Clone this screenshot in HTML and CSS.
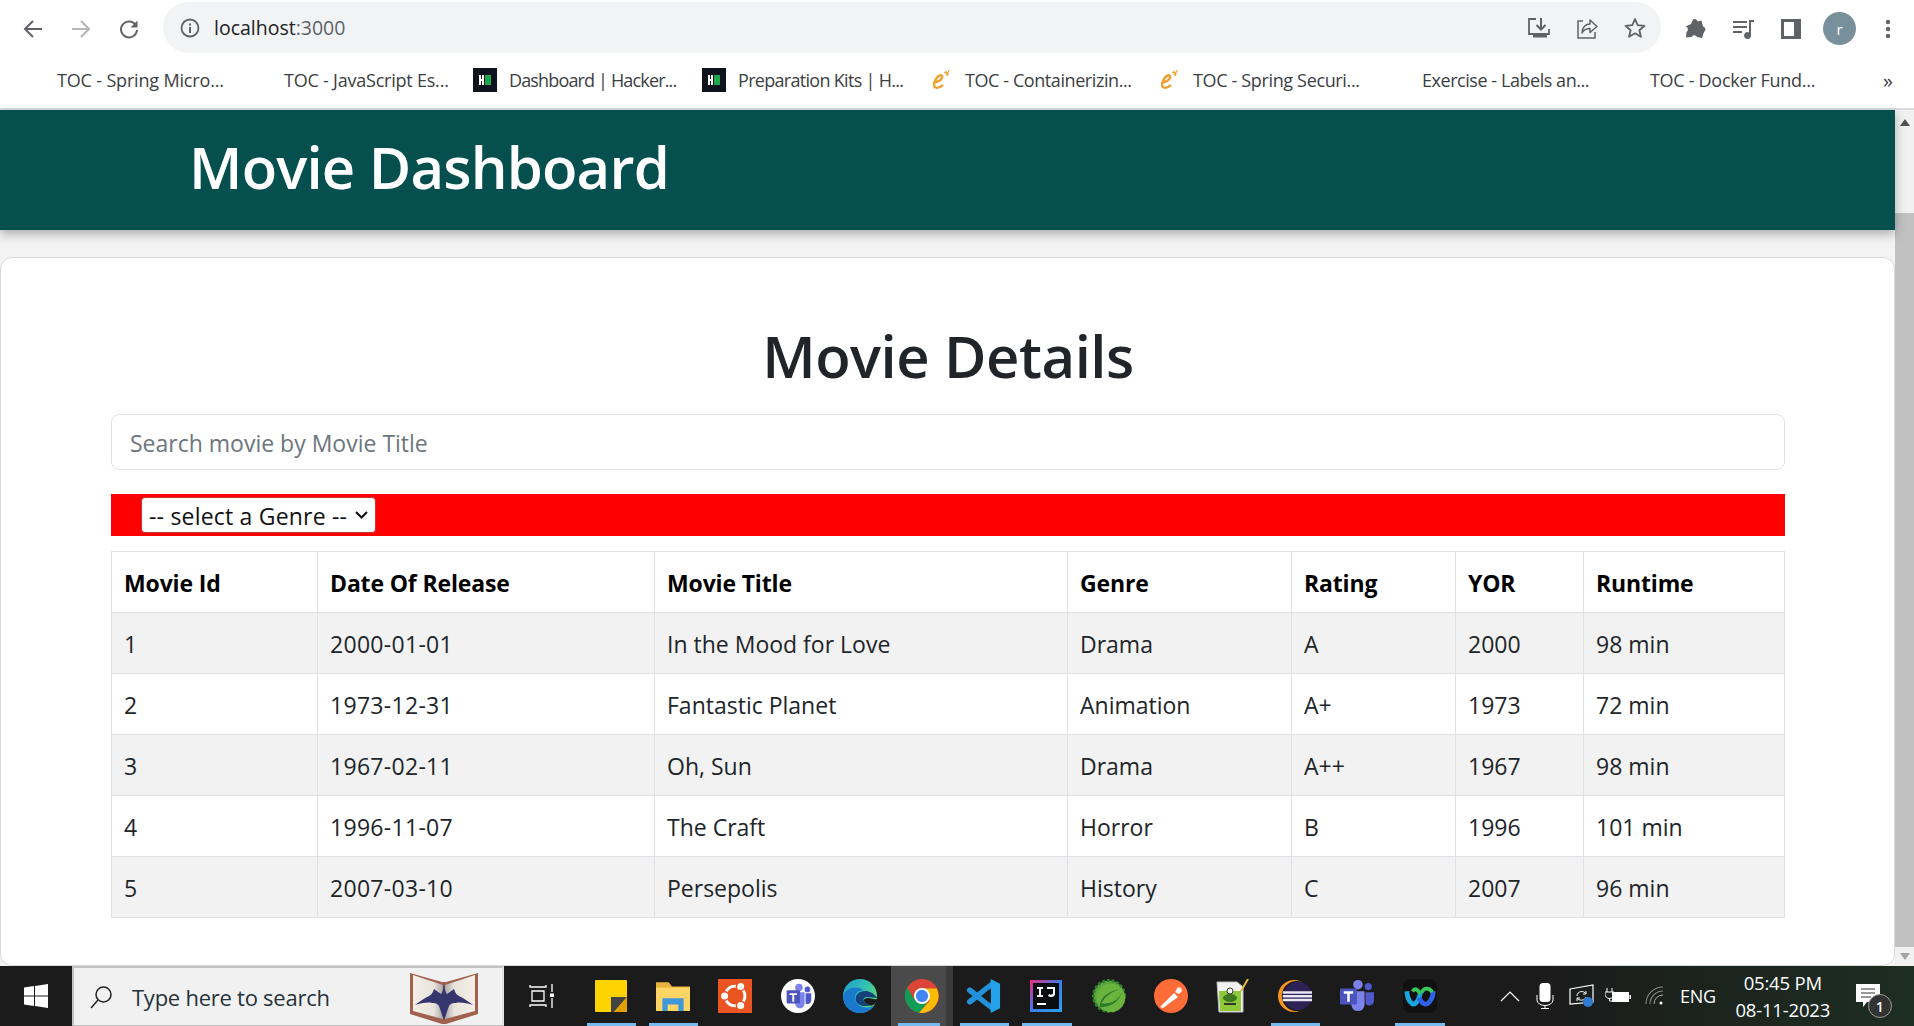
FILE: index.html
```html
<!DOCTYPE html>
<html lang="en">
<head>
<meta charset="utf-8">
<title>Movie Dashboard</title>
<link rel="stylesheet" href="styles.css">
</head>
<body>
<div class="toolbar">
  <div class="nav">
    <svg class="nav-icon" viewBox="0 0 24 24"><path d="M21 12H4M12 4l-8 8 8 8" fill="none" stroke="#5f6368" stroke-width="2"/></svg>
    <svg class="nav-icon" viewBox="0 0 24 24"><path d="M3 12h17M12 4l8 8-8 8" fill="none" stroke="#b4b6b9" stroke-width="2"/></svg>
    <svg class="nav-icon" viewBox="0 0 24 24"><path d="M19 8.500A8 8 0 1 0 20 13" fill="none" stroke="#5f6368" stroke-width="2"/><path d="M20.500 3.500v7h-7z" fill="#5f6368"/></svg>
  </div>
  <div class="omnibox">
    <svg class="info" viewBox="0 0 20 20"><circle cx="10" cy="10" r="8.500" fill="none" stroke="#5f6368" stroke-width="1.800"/><path d="M9 9h2v6H9zM9 5.500h2v2H9z" fill="#5f6368"/></svg>
    <span class="url">localhost<span class="port">:3000</span></span>
    <span class="omni-actions">
      <svg class="tool" viewBox="0 0 24 24"><path d="M9 3H2v15h20v-5" fill="none" stroke="#5f6368" stroke-width="1.800"/><path d="M14 2v11M9.500 9l4.500 4.500L18.500 9" fill="none" stroke="#5f6368" stroke-width="2"/><path d="M6 18h14v3.500H6z" fill="#5f6368"/></svg>
      <svg class="tool" viewBox="0 0 24 24"><path d="M8 5H3v17h17v-6" fill="none" stroke="#5f6368" stroke-width="1.500"/><path d="M7 17c0-6 4-9 8-9V4l7 6.500-7 6v-4c-3 0-6 1-8 4.500z" fill="none" stroke="#5f6368" stroke-width="1.500" stroke-linejoin="round"/></svg>
      <svg class="tool" viewBox="0 0 24 24"><path d="m12 3 2.700 6.200 6.800.6-5.100 4.400 1.500 6.600L12 17.300l-5.900 3.500 1.500-6.600-5.100-4.400 6.800-.6z" fill="none" stroke="#5f6368" stroke-width="1.800" stroke-linejoin="round"/></svg>
    </span>
  </div>
  <div class="chrome-actions">
    <svg class="tool" viewBox="0 0 24 24"><path d="M10 2.500a2.800 2.800 0 0 1 4.500 2l4-1 1.500 6a3 3 0 0 1 1 5.500l-2 6-5-1a3 3 0 0 0-5.500 0l-5.500.5.500-5.500a3 3 0 0 0-1-5.500l5.500-2.500z" fill="#5f6368"/></svg>
    <svg class="tool" viewBox="0 0 24 24"><path d="M2 4h14v2H2zM2 9h14v2H2zM2 14h9v2H2zM18 3h5v2h-3v13.500a3.500 3.500 0 1 1-2-3.100z" fill="#5f6368"/></svg>
    <svg class="tool" viewBox="0 0 24 24"><path d="M2 2h20v20H2zM5 5v14h10V5z" fill="#5f6368" fill-rule="evenodd"/></svg>
    <span class="avatar">r</span>
    <svg class="tool" viewBox="0 0 24 24"><circle cx="12" cy="5" r="2.200" fill="#5f6368"/><circle cx="12" cy="12" r="2.200" fill="#5f6368"/><circle cx="12" cy="19" r="2.200" fill="#5f6368"/></svg>
  </div>
</div>

<div class="bookmarks">
  <div class="bookmark"><span class="fav"></span><span>TOC - Spring Micro...</span></div>
  <div class="bookmark"><span class="fav"></span><span>TOC - JavaScript Es...</span></div>
  <div class="bookmark"><span class="fav"><svg viewBox="0 0 24 24"><rect width="24" height="24" fill="#0e141e"/><path d="M6 7h2v4h1V7h2v10H9v-4H8v4H6z" fill="#fff"/><rect x="12" y="7" width="6" height="10" fill="#1ba94c"/></svg></span><span>Dashboard | Hacker...</span></div>
  <div class="bookmark"><span class="fav"><svg viewBox="0 0 24 24"><rect width="24" height="24" fill="#0e141e"/><path d="M6 7h2v4h1V7h2v10H9v-4H8v4H6z" fill="#fff"/><rect x="12" y="7" width="6" height="10" fill="#1ba94c"/></svg></span><span>Preparation Kits | H...</span></div>
  <div class="bookmark"><span class="fav"><svg viewBox="0 0 24 24"><path d="M4 15c6-1 10-4 9-7-1-2-5 0-7 5-3 7 2 9 8 4" fill="none" stroke="#f0a030" stroke-width="2.400"/><path d="m17 3 1.500 5M20.500 2 17 7M15 4l5 2" stroke="#f0a030" stroke-width="1.200"/></svg></span><span>TOC - Containerizin...</span></div>
  <div class="bookmark"><span class="fav"><svg viewBox="0 0 24 24"><path d="M4 15c6-1 10-4 9-7-1-2-5 0-7 5-3 7 2 9 8 4" fill="none" stroke="#f0a030" stroke-width="2.400"/><path d="m17 3 1.500 5M20.500 2 17 7M15 4l5 2" stroke="#f0a030" stroke-width="1.200"/></svg></span><span>TOC - Spring Securi...</span></div>
  <div class="bookmark"><span class="fav"></span><span>Exercise - Labels an...</span></div>
  <div class="bookmark"><span class="fav"></span><span>TOC - Docker Fund...</span></div>
  <div class="more">»</div>
</div>

<div class="viewport">
  <div class="page">
    <header class="app-header"><h1>Movie Dashboard</h1></header>
    <main class="card">
      <h2>Movie Details</h2>
      <input class="search" type="text" placeholder="Search movie by Movie Title">
      <div class="filter">
        <select class="genre"><option>-- select a Genre --</option></select>
      </div>
      <table class="movies">
        <colgroup><col class="c1"><col class="c2"><col class="c3"><col class="c4"><col class="c5"><col class="c6"><col class="c7"></colgroup>
        <thead><tr><th>Movie Id</th><th>Date Of Release</th><th>Movie Title</th><th>Genre</th><th>Rating</th><th>YOR</th><th>Runtime</th></tr></thead>
        <tbody>
          <tr><td>1</td><td>2000-01-01</td><td>In the Mood for Love</td><td>Drama</td><td>A</td><td>2000</td><td>98 min</td></tr>
          <tr><td>2</td><td>1973-12-31</td><td>Fantastic Planet</td><td>Animation</td><td>A+</td><td>1973</td><td>72 min</td></tr>
          <tr><td>3</td><td>1967-02-11</td><td>Oh, Sun</td><td>Drama</td><td>A++</td><td>1967</td><td>98 min</td></tr>
          <tr><td>4</td><td>1996-11-07</td><td>The Craft</td><td>Horror</td><td>B</td><td>1996</td><td>101 min</td></tr>
          <tr><td>5</td><td>2007-03-10</td><td>Persepolis</td><td>History</td><td>C</td><td>2007</td><td>96 min</td></tr>
        </tbody>
      </table>
    </main>
  </div>
  <div class="scrollbar">
    <span class="arrow-up"></span>
    <span class="track"></span>
    <span class="thumb"></span>
    <span class="arrow-down"></span>
  </div>
</div>

<footer class="taskbar">
  <div class="start"><svg viewBox="0 0 24 24" width="24" height="24"><path d="M0 3.500 10 2v9.500H0zM11 1.900 24 0v11.500H11zM0 12.500h10V22L0 20.500zM11 12.500h13V24l-13-1.900z" fill="#fff"/></svg></div>
  <div class="task-search">
    <svg class="lens" viewBox="0 0 24 24"><circle cx="14.500" cy="9.500" r="7.500" fill="none" stroke="#222" stroke-width="1.500"/><path d="M9 15 2 23" stroke="#222" stroke-width="1.500"/></svg>
    <span class="type">Type here to search</span>
    <svg class="book" viewBox="0 0 72 54"><defs><linearGradient id="pageL" x1="0" x2="1" y1="0" y2="0"><stop offset="0" stop-color="#f4efe6"/><stop offset=".7" stop-color="#e8e3dc"/><stop offset="1" stop-color="#a9a6a6"/></linearGradient><linearGradient id="pageR" x1="1" x2="0" y1="0" y2="0"><stop offset="0" stop-color="#f4efe6"/><stop offset=".7" stop-color="#e8e3dc"/><stop offset="1" stop-color="#a9a6a6"/></linearGradient></defs><path d="M2 3 34 12h4L70 3v41L38 54h-4L2 44z" fill="#a2604f"/><path d="M5 5 35 15v34L5 41z" fill="url(#pageL)"/><path d="M67 5 37 15v34l30-8z" fill="url(#pageR)"/><path d="M36 13c1 6 1 9 3 11l7-5c1 3 2 6 7 8 4 2 8 5 12 8-6-2-13-3-17-2-3 0-5 0-7 3-2 5-3 10-5 14-2-4-3-9-5-14-2-3-4-3-7-3-4-1-11 0-17 2 4-3 8-6 12-8 5-2 6-5 7-8l7 5c2-2 2-5 3-11z" fill="#35366e"/></svg>
  </div>
  <div class="taskview"><svg viewBox="0 0 26 24" width="26" height="24"><path d="M1 1v2h16V1M3 7h12v10H3zM1 23v-2h16v2" fill="none" stroke="#fff" stroke-width="1.300"/><path d="M23 0v8M23 14v10" stroke="#fff" stroke-width="1.300"/><rect x="21" y="9.500" width="4" height="3.500" fill="#fff"/></svg></div>
  <div class="apps">
    <div class="app running">
      <svg class="small" viewBox="0 0 32 32"><rect width="32" height="32" rx="1" fill="#ffd300"/><path d="M16 32V17h16L19 32z" fill="#444"/><path d="M32 17v15H19z" fill="#e2a100"/></svg>
    </div>
    <div class="app running">
      <svg viewBox="0 0 32 32"><path d="M0 3h12l3 4h17v23H0z" fill="#e8b33b"/><path d="M0 8h32v22H0z" fill="#fdd466"/><path d="M6 18h20v12h-5v-6H11v6H6z" fill="#3f98d8"/></svg>
    </div>
    <div class="app">
      <svg viewBox="0 0 36 36"><rect width="36" height="36" fill="#e95420"/><circle cx="18" cy="18" r="10.500" fill="none" stroke="#fff" stroke-width="3"/><circle cx="7" cy="18" r="4.500" fill="#fff" stroke="#e95420" stroke-width="1.500"/><circle cx="24" cy="8" r="4.500" fill="#fff" stroke="#e95420" stroke-width="1.500"/><circle cx="24" cy="28" r="4.500" fill="#fff" stroke="#e95420" stroke-width="1.500"/></svg>
    </div>
    <div class="app">
      <svg viewBox="0 0 36 36"><circle cx="18" cy="18" r="18" fill="#fff"/><circle cx="19" cy="9" r="4" fill="#7b83eb"/><circle cx="28" cy="11" r="3" fill="#5059c9"/><path d="M15 14h10v12a5 5 0 0 1-10 0z" fill="#7b83eb"/><path d="M26 15h6v8a4 4 0 0 1-6 3z" fill="#5059c9"/><rect x="6" y="12" width="14" height="14" rx="1" fill="#4b53bc"/><path d="M9 15h8v2h-3v7h-2v-7H9z" fill="#fff"/></svg>
    </div>
    <div class="app">
      <svg viewBox="0 0 36 36"><defs><linearGradient id="edgeG" x1="0" y1="0" x2="1" y2=".7"><stop offset="0" stop-color="#1b9fd0"/><stop offset=".55" stop-color="#35c1b0"/><stop offset="1" stop-color="#62e06f"/></linearGradient></defs><circle cx="18" cy="18" r="18" fill="url(#edgeG)"/><path d="M0 18c0 11 8 18 18 18 6 0 12-3 15-8-6 3-14 3-18-2-5-6-2-14 7-14C14 6 3 9 0 18z" fill="#1a78cf"/><path d="M36 20c-4-6-10-8-15-7-6 1-9 6-7 11 3 5 10 6 19 3-6 1-10-1-11-4-1-2 1-4 3-4 4 0 8 1 11 1z" fill="#14427f"/><path d="M36 21.500c-3 0-7-1.500-10-1.500-2 0-4 1-4 3 1 2 3 4 8 5l3-1c2-2 3-4 3-5.500z" fill="#1b1b1b"/></svg>
    </div>
    <div class="app active">
      <svg viewBox="0 0 36 36"><circle cx="18" cy="18" r="18" fill="#db4437"/><path d="M18 18 2.400 27A18 18 0 0 1 2.400 9L10 22z" fill="#0f9d58"/><path d="M18 18 2.400 27A18 18 0 0 0 15 35.800l8-10z" fill="#0f9d58"/><path d="M18 10h15.500A18 18 0 0 1 15 35.800L26 23z" fill="#fbbc05"/><circle cx="18" cy="18" r="8.500" fill="#fff"/><circle cx="18" cy="18" r="6.500" fill="#4285f4"/></svg>
    </div>
    <div class="app running">
      <svg viewBox="0 0 36 36"><path d="M3 12 26 30M3 24 26 6" stroke="#2291da" stroke-width="6" stroke-linecap="round"/><path d="M25 0 35 5v26l-10 5z" fill="#23a1ea"/><path d="M25 10 15 18l10 8z" fill="#1b1b1b"/></svg>
    </div>
    <div class="app running">
      <svg class="small" viewBox="0 0 32 32"><defs><linearGradient id="ijg" x1="0" y1="0" x2="1" y2="1"><stop offset="0" stop-color="#f0297e"/><stop offset=".5" stop-color="#3a7ee8"/><stop offset="1" stop-color="#2aa4f0"/></linearGradient></defs><rect width="32" height="32" fill="url(#ijg)"/><rect x="3" y="3" width="26" height="26" fill="#0b0b12"/><path d="M7 7h6v2h-2v6h2v2H7v-2h2V9H7zM17 7h8v7c0 3-4 4-7 2l1-2c1 1 4 1 4-1V9h-6z" fill="#fff"/><path d="M7 23h9v2H7z" fill="#fff"/></svg>
    </div>
    <div class="app">
      <svg viewBox="0 0 36 36"><circle cx="18" cy="18" r="16.500" fill="#5aa83a" stroke="#2f7f2c" stroke-width="3" stroke-dasharray="3 2"/><circle cx="20" cy="20" r="15" fill="#6cb33e"/><path d="M8 30c12 0 22-6 24-18-2 10-12 15-22 14 4-8 10-12 20-16-12 3-22 9-22 20z" fill="#2c7a2a"/></svg>
    </div>
    <div class="app">
      <svg viewBox="0 0 34 34"><circle cx="17" cy="17" r="17" fill="#ff6c37"/><path d="M6 28 20 14l4 4L9 29zM21 13l3-5 3 1 1 3-3 3z" fill="#fff"/></svg>
    </div>
    <div class="app">
      <svg viewBox="0 0 34 34"><path d="M1 3h20l6 5v25H3z" fill="#f2f2f2" stroke="#bbb"/><path d="M3 12h22v20H4z" fill="#8fc93a"/><ellipse cx="14" cy="19" rx="7" ry="4" fill="#3d7a1f"/><circle cx="14" cy="12" r="3" fill="#fff" stroke="#333"/><path d="M8 25h12" stroke="#333" stroke-width="2"/><path d="m25 12 7-12" stroke="#e7b93a" stroke-width="2"/></svg>
    </div>
    <div class="app running">
      <svg viewBox="0 0 36 36"><circle cx="17" cy="18" r="17" fill="#f7941e"/><circle cx="20" cy="18" r="16" fill="#1b1b1b"/><circle cx="21" cy="18" r="15" fill="#2c2255"/><path d="M5 13h32v2.500H5zM5 17h32v2.500H5zM5 21h32v2.500H5z" fill="#e9e6f5"/></svg>
    </div>
    <div class="app">
      <svg viewBox="0 0 36 34"><circle cx="19" cy="5" r="5" fill="#7b83eb"/><circle cx="30" cy="7" r="3.800" fill="#5059c9"/><path d="M12 12h14v14a7 7 0 0 1-14 0z" fill="#7b83eb"/><path d="M27 13h9v9a5 5 0 0 1-9 3z" fill="#5059c9"/><rect y="9" width="18" height="17" rx="1" fill="#4b53bc"/><path d="M4 12h10v2.500h-3.700V23H7.700v-8.500H4z" fill="#fff"/></svg>
    </div>
    <div class="app running">
      <svg viewBox="0 0 36 36"><rect width="36" height="36" rx="8" fill="#111"/><path d="M4 13c1 10 5 15 9 13 3-2 5-9 6-13" fill="none" stroke="#1aa7e0" stroke-width="5"/><path d="M17 20c2 4 5 8 9 6 4-3 6-8 6-13" fill="none" stroke="#2f62e8" stroke-width="5"/><path d="M10 13c3-4 6-2 8 3M20 14c2-5 8-5 11 0" fill="none" stroke="#3ac65a" stroke-width="4"/></svg>
    </div>
  </div>
  <div class="tray">
    <svg class="t-chevron" viewBox="0 0 20 12"><path d="m1 11 9-9 9 9" fill="none" stroke="#fff" stroke-width="1.200"/></svg>
    <svg class="t-mic" viewBox="0 0 18 26"><rect x="3.500" y="0" width="11" height="19" rx="3.500" fill="#fff"/><path d="M1 12v5a8 5.500 0 0 0 16 0v-5M9 22.500V25M5 25.500h8" fill="none" stroke="#fff"/></svg>
    <svg class="t-update" viewBox="0 0 26 24"><path d="M1 5 24 1v17l-23 2z" fill="none" stroke="#fff" stroke-width="1.200"/><path d="M8 12c0-5 7-6 9-2M17 13c-1 4-7 4-9 1M14 10h3V7M8 17v-3h3" fill="none" stroke="#fff"/><circle cx="19" cy="18" r="5" fill="#2d7cd3"/></svg>
    <svg class="t-battery" viewBox="0 0 26 16"><path d="M2 0v4M7 0v4M0 4h9v2a4.500 4.500 0 0 1-9 0zM4.500 10v3h3" fill="none" stroke="#fff"/><rect x="7" y="4" width="17" height="10" fill="#fff"/><rect x="24.500" y="7" width="1.500" height="4" fill="#fff"/></svg>
    <svg class="t-wifi" viewBox="0 0 20 20"><g fill="none" stroke="#8a8a8a" stroke-width="1.100"><path d="M1 18A17 17 0 0 1 18 1"/><path d="M5 18A13 13 0 0 1 18 5"/></g><path d="M9 18a9 9 0 0 1 9-9" fill="none" stroke="#aaa"/><circle cx="16" cy="17" r="1.500" fill="#fff"/></svg>
    <span class="lang">ENG</span>
    <div class="clock"><span>05:45 PM</span><span>08-11-2023</span></div>
    <div class="notif">
      <svg viewBox="0 0 24 24" width="24" height="24"><path d="M0 0h24v18H11l-4 5v-5H0z" fill="#fff"/><path d="M5 5h14M5 9h14M5 13h10" stroke="#333"/></svg>
      <span class="badge">1</span>
    </div>
  </div>
</footer>
</body>
</html>
```

FILE: styles.css
```css
* { box-sizing: border-box; }
html, body { margin: 0; height: 100%; }
body {
  display: flex;
  flex-direction: column;
  height: 100vh;
  overflow: hidden;
  font-family: "Open Sans", "Noto Sans", sans-serif;
  background: #fff;
  color: #212529;
}

/* Browser toolbar */
.toolbar {
  display: flex;
  align-items: center;
  height: 57px;
  background: #fff;
  flex: none;
}
.nav { display: flex; width: 163px; padding-left: 21px; gap: 24px; }
.nav-icon { width: 24px; height: 24px; flex: none; }
.omnibox {
  width: 1498px;
  height: 51px;
  background: #f1f3f4;
  border-radius: 26px;
  display: flex;
  align-items: center;
  padding-left: 17px;
  margin-top: -2px;
}
.info { width: 20px; height: 20px; flex: none; }
.url { margin-left: 14px; font-size: 19.500px; color: #202124; }
.port { color: #5f6368; }
.omni-actions { margin-left: auto; margin-right: 14px; display: flex; gap: 24px; }
.tool { width: 24px; height: 24px; flex: none; display: block; }
.chrome-actions { display: flex; align-items: center; gap: 24px; margin-left: 22px; }
.avatar {
  width: 33px; height: 33px; border-radius: 50%;
  background: #78909c; color: #fff; font-size: 15px;
  display: flex; align-items: center; justify-content: center;
  margin: 0 -4px 0 -4px;
}

/* Bookmarks */
.bookmarks {
  display: flex;
  align-items: center;
  height: 53px;
  padding-left: 19px;
  padding-bottom: 5px;
  border-bottom: 2px solid #d9dcdf;
  font-size: 18px;
  letter-spacing: -.17px;
  color: #3c4043;
  flex: none;
}
.bookmark { display: flex; align-items: center; width: 228px; flex: none; gap: 12px; white-space: nowrap; }
.bookmark:nth-child(1) { width: 227px; }
.bookmark:nth-child(2) { width: 225px; letter-spacing: -.22px; }
.bookmark:nth-child(3) { width: 229px; letter-spacing: -.85px; }
.bookmark:nth-child(4) { width: 227px; letter-spacing: -.7px; }
.bookmark:nth-child(5) { letter-spacing: -.42px; }
.bookmark:nth-child(6) { width: 229px; letter-spacing: -.35px; }
.bookmark:nth-child(7) { letter-spacing: -.45px; }
.bookmark:nth-child(8) { letter-spacing: -.3px; }
.fav { width: 24px; height: 24px; flex: none; margin-left: 2px; }
.fav svg { width: 24px; height: 24px; display: block; }
.more { margin-left: auto; margin-right: 21px; font-size: 20px; letter-spacing: 0; }

/* Page */
.viewport { flex: 1; min-height: 0; display: flex; }
.page { flex: 1; min-width: 0; display: flex; flex-direction: column; background: #f3f3f3; }
.app-header {
  height: 120px;
  flex: none;
  background: #054f4f;
  padding-left: 189px;
  display: flex;
  align-items: center;
  box-shadow: 0 4px 10px rgba(0, 0, 0, .3);
  position: relative;
}
.app-header h1 { margin: 0 0 7px; font-size: 58px; font-weight: 600; line-height: 1; color: #fff; letter-spacing: -.8px; }
.card {
  margin-top: 27px;
  flex: 1;
  background: #fff;
  border: 1px solid #d7d9db;
  border-radius: 12px;
  padding: 0 109px 0 110px;
  min-height: 0;
}
.card h2 {
  margin: 69px 0 0;
  height: 87px;
  text-align: center;
  font-size: 58px;
  line-height: 1;
  font-weight: 600;
  letter-spacing: -.45px;
  color: #212529;
}
.search {
  display: block;
  width: 100%;
  height: 56px;
  border: 1px solid #dee2e6;
  border-radius: 8px;
  padding: 2px 18px 0;
  font: 23px "Open Sans", sans-serif;
  outline: none;
}
.search::placeholder { color: #6c757d; opacity: 1; }
.filter {
  margin-top: 24px;
  height: 42px;
  background: #f00;
  padding-left: 30px;
  display: flex;
  align-items: center;
}
.genre {
  appearance: none;
  width: 235px;
  height: 36px;
  border: 1px solid #c33;
  border-radius: 4px;
  background: #fff url("data:image/svg+xml,%3Csvg xmlns='http://www.w3.org/2000/svg' viewBox='0 0 13 8'%3E%3Cpath d='M1 1l5.500 5.500L12 1' fill='none' stroke='%23111' stroke-width='2'/%3E%3C/svg%3E") no-repeat right 7px center / 13px 8px;
  color: #111;
  font: 23px "Open Sans", sans-serif;
  letter-spacing: .2px;
  padding: 2px 0 0 7px;
}
.movies {
  margin-top: 15px;
  width: calc(100% - 1px);
  table-layout: fixed;
  border-collapse: collapse;
  font-size: 23px;
}
.c1 { width: 206px; } .c2 { width: 337px; } .c3 { width: 413px; } .c4 { width: 224px; }
.c5 { width: 164px; } .c6 { width: 128px; } .c7 { width: 201px; }
.movies th, .movies td {
  height: 61px;
  padding: 2px 12px 0;
  border: 1px solid #dee2e6;
  text-align: left;
  white-space: nowrap;
}
.movies th { color: #000; font-weight: 700; letter-spacing: -.15px; }
.movies td { color: #212529; }
.movies td:nth-child(2) { letter-spacing: .3px; }
.movies tbody tr:nth-child(odd) { background: #f2f2f2; }

/* Scrollbar */
.scrollbar { width: 19px; flex: none; background: #f1f1f1; display: flex; flex-direction: column; align-items: center; }
.arrow-up { margin-top: 9px; width: 0; height: 0; border: 5px solid transparent; border-top: 0; border-bottom: 7px solid #505050; }
.track { height: 87px; }
.thumb { width: 19px; flex: 1; background: #c1c1c1; }
.arrow-down { margin: 6px 0 6px; width: 0; height: 0; border: 5px solid transparent; border-bottom: 0; border-top: 7px solid #a3a3a3; }

/* Taskbar */
.taskbar {
  height: 60px;
  flex: none;
  background: linear-gradient(90deg, #1b1b1b 0, #1b1b1b 80%, #1d2e22 100%);
  display: flex;
  color: #fff;
}
.start { width: 72px; display: flex; align-items: center; justify-content: center; }
.task-search {
  width: 432px;
  background: #f1f1f1;
  border: 2px solid #c2c2c2;
  border-right-color: #e0e0e0;
  border-bottom-width: 1px;
  display: flex;
  align-items: center;
  padding-left: 15px;
  color: #222;
}
.lens { width: 24px; height: 24px; flex: none; }
.type { margin-left: 19px; font-size: 22px; letter-spacing: -.25px; color: #26323a; }
.book { width: 72px; height: 54px; margin-left: 78px; flex: none; }
.taskview { width: 76px; display: flex; align-items: center; justify-content: center; }
.apps { display: flex; width: 892px; flex: none; }
.app { width: 62.200px; display: flex; align-items: center; justify-content: center; flex: none; position: relative; }
.app svg { width: 34px; height: 34px; display: block; }
.app svg.small { width: 32px; height: 32px; }
.app.running::after, .app.active::after {
  content: "";
  position: absolute;
  left: 7px; right: 6px; bottom: 0;
  height: 3px;
  background: #76b9ed;
}
.app.active { background: #4a4a4a; border-right: 7px solid #3a3a3a; }
.app.active svg { margin-left: 7px; }
.tray { flex: 1; display: flex; align-items: center; padding-left: 26px; }
.t-chevron { width: 20px; height: 12px; flex: none; margin-left: 2px; }
.t-mic { width: 18px; height: 26px; flex: none; margin-left: 16px; }
.t-update { width: 26px; height: 24px; flex: none; margin-left: 15px; }
.t-battery { width: 26px; height: 16px; flex: none; margin-left: 10px; }
.t-wifi { width: 20px; height: 20px; flex: none; margin-left: 14px; }
.lang { font-size: 18px; margin-left: 15px; letter-spacing: -.3px; }
.clock {
  display: flex; flex-direction: column; align-items: center;
  width: 104px; margin-left: 15px;
  font-size: 18.500px; line-height: 27px; letter-spacing: -.2px;
}
.notif { position: relative; margin-left: 21px; width: 24px; height: 24px; }
.notif svg { display: block; }
.badge {
  position: absolute; left: 12px; top: 10px;
  width: 24px; height: 24px; border-radius: 50%;
  background: #333; border: 1px solid #999; color: #fff;
  font-size: 14px; font-weight: 600;
  display: flex; align-items: center; justify-content: center;
}
```
